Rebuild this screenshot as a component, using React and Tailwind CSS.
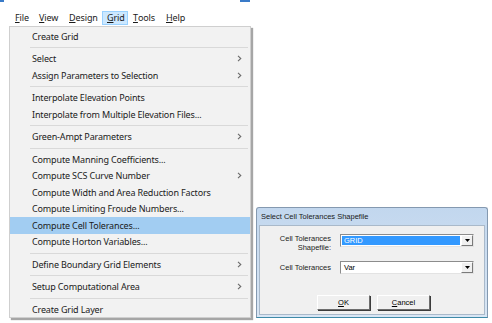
import React from 'react';

const menuFont = { fontFamily: '"Noto Sans", "Open Sans", sans-serif' };
const dlgFont = { fontFamily: '"Liberation Sans", Arial, sans-serif' };

const Chevron = () => (
  <svg width="5" height="7" viewBox="0 0 5 7" className="ml-auto mr-[8px]">
    <path d="M1 0.8 L3.8 3.5 L1 6.2" fill="none" stroke="#6a6a6a" strokeWidth="1.1" />
  </svg>
);

const groups = [
  [{ label: 'Create Grid' }],
  [{ label: 'Select', sub: true }, { label: 'Assign Parameters to Selection', sub: true }],
  [{ label: 'Interpolate Elevation Points' }, { label: 'Interpolate from Multiple Elevation Files...' }],
  [{ label: 'Green-Ampt Parameters', sub: true }],
  [
    { label: 'Compute Manning Coefficients...' },
    { label: 'Compute SCS Curve Number', sub: true },
    { label: 'Compute Width and Area Reduction Factors' },
    { label: 'Compute Limiting Froude Numbers...' },
    { label: 'Compute Cell Tolerances...', active: true },
    { label: 'Compute Horton Variables...' },
  ],
  [{ label: 'Define Boundary Grid Elements', sub: true }],
  [{ label: 'Setup Computational Area', sub: true }],
  [{ label: 'Create Grid Layer' }],
];

const MenuItem = ({ label, sub, active }) => (
  <div
    className={`flex items-center h-[16.5px] pl-[22px] text-[9px] tracking-[-0.15px] text-[#1b1b1b] whitespace-nowrap ${
      active ? 'bg-[#a2cdf2]' : ''
    }`}
  >
    <span>{label}</span>
    {sub && <Chevron />}
  </div>
);

const Separator = () => (
  <div className="h-[6px] flex items-center pl-[20px] pr-[2px]">
    <div className="h-px w-full bg-[#d9d9d9]" />
  </div>
);

const MenuBar = () => {
  const items = [
    ['F', 'ile', 'w-[24px]'],
    ['V', 'iew', 'w-[30px]'],
    ['D', 'esign', 'w-[38px]'],
    ['G', 'rid', 'w-[26px]'],
    ['T', 'ools', 'w-[33px]'],
    ['H', 'elp', 'w-[28px]'],
  ];
  return (
    <div className="flex h-[15px] mt-[9px] pl-[10px] text-[9px] tracking-[-0.1px] text-[#1b1b1b]" style={menuFont}>
      {items.map(([u, rest, w]) => (
        <div
          key={u}
          className={`${w} h-[14px] flex items-center pl-[4px] border ${
            u === 'G' ? 'bg-[#cce8ff] border-[#99d1ff]' : 'border-transparent'
          }`}
        >
          <span className="underline underline-offset-[1px]">{u}</span>
          {rest}
        </div>
      ))}
    </div>
  );
};

const Combo = ({ value, selected }) => (
  <div className="w-[134px] h-[13px] flex border border-[#8c8c8c] border-r-[#e3e3e3] border-b-[#e3e3e3] bg-white">
    <div className="flex-1 p-[1px]">
      <div
        className={`h-full flex items-center pl-[2px] text-[7.5px] ${
          selected ? 'bg-[#3399ff] text-white' : 'text-black'
        }`}
      >
        {value}
      </div>
    </div>
    <div className="w-[12px] h-full flex items-center justify-center bg-[#f0f0f0] border border-[#ffffff] border-r-[#7a7a7a] border-b-[#7a7a7a]">
      <svg width="5" height="3" viewBox="0 0 5 3">
        <path d="M0 0 H5 L2.5 3 Z" fill="#000" />
      </svg>
    </div>
  </div>
);

const Button = ({ u, rest }) => (
  <div className="w-[53px] h-[15px] flex items-center justify-center text-[7.5px] text-black bg-[#f0f0f0] border border-[#ffffff] border-r-[#6d6d6d] border-b-[#6d6d6d] shadow-[1px_1px_0_#3c3c3c]">
    <span className="underline">{u}</span>
    {rest}
  </div>
);

const Dialog = () => (
  <div
    className="w-[232px] h-[111px] mt-[181px] ml-[5px] flex flex-col rounded-t-[3px] border border-[#8499b0] border-b-[#3f8aa8] bg-gradient-to-b from-[#c2d7ee] to-[#d9e6f4]"
    style={dlgFont}
  >
    <div className="h-[17px] flex items-center pl-[4px] text-[7.5px] text-[#1a1a1a]">
      Select Cell Tolerances Shapefile
    </div>
    <div className="flex-1 mx-[2px] mb-[2px] bg-[#f0f0f0] border border-[#a9b9ca] flex flex-col">
      <div className="flex mt-[8px]">
        <div className="w-[71px] text-right text-[7.5px] leading-[9px] text-[#222]">
          Cell Tolerances
          <br />
          Shapefile:
        </div>
        <div className="ml-[9px]">
          <Combo value="GRID" selected />
        </div>
      </div>
      <div className="flex mt-[9px] items-center">
        <div className="w-[71px] text-right text-[7.5px] text-[#222]">Cell Tolerances</div>
        <div className="ml-[9px]">
          <Combo value="Var" />
        </div>
      </div>
      <div className="flex gap-[7px] mt-[21px] ml-[57px]">
        <Button u="O" rest="K" />
        <Button u="C" rest="ancel" />
      </div>
    </div>
  </div>
);

export default function App() {
  return (
    <div className="w-[492px] h-[323px] bg-white overflow-hidden">
      <div className="flex h-[2px]">
        <div className="w-[4px] bg-[#3a7bc8]" />
        <div className="w-[236px]" />
        <div className="w-[10px] bg-[#3a7bc8]" />
      </div>
      <MenuBar />
      <div className="flex">
        <div
          className="ml-[9px] w-[242px] h-[292px] pt-[1px] bg-[#f2f2f2] border border-[#cfcfcf] shadow-[2px_2px_1px_rgba(0,0,0,0.35)]"
          style={menuFont}
        >
          {groups.map((g, i) => (
            <React.Fragment key={i}>
              {i > 0 && <Separator />}
              {g.map((it) => (
                <MenuItem key={it.label} {...it} />
              ))}
            </React.Fragment>
          ))}
        </div>
        <Dialog />
      </div>
    </div>
  );
}
